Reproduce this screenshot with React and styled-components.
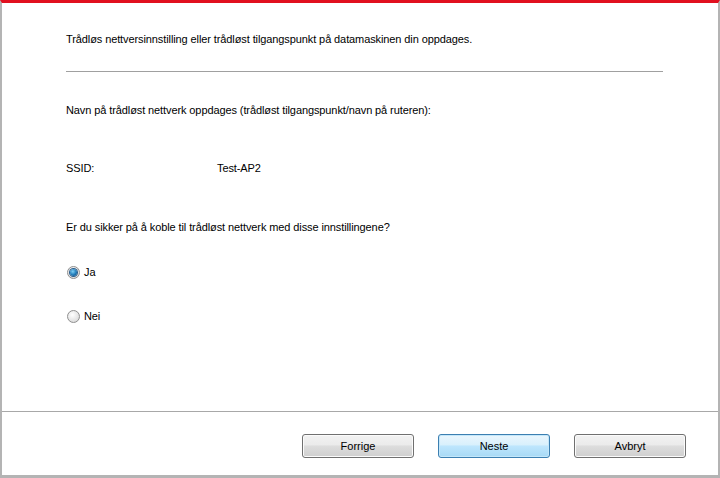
import styled, { createGlobalStyle } from "styled-components";

const GlobalStyle = createGlobalStyle`
  html, body {
    margin: 0;
    padding: 0;
    background: #ffffff;
  }
  * {
    box-sizing: border-box;
  }
`;

const Window = styled.div`
  width: 720px;
  height: 478px;
  display: flex;
  flex-direction: column;
  background: #ffffff;
  border-top: 3px solid #e1101f;
  border-left: 2px solid #b4b4b4;
  border-right: 2px solid #b4b4b4;
  border-bottom: 3px solid #b4b4b4;
  font-family: "Liberation Sans", Arial, sans-serif;
  font-size: 11px;
  letter-spacing: -0.1px;
  color: #000000;
`;

const Content = styled.div`
  flex: 1;
  display: flex;
  flex-direction: column;
  padding: 29px 55px 0 64px;
`;

const Text = styled.div`
  height: 14px;
  line-height: 14px;
  margin-top: ${(p) => p.$gap || 0}px;
  white-space: nowrap;
`;

const Divider = styled.hr`
  margin: 25px 0 0;
  border: 0;
  height: 1px;
  background: #a0a0a0;
`;

const InfoRow = styled.div`
  display: grid;
  grid-template-columns: 151px auto;
  height: 14px;
  line-height: 14px;
  margin-top: ${(p) => p.$gap}px;
`;

const RadioRow = styled.label`
  display: flex;
  align-items: center;
  gap: 4px;
  height: 14px;
  margin-top: ${(p) => p.$gap}px;
  margin-left: 1px;
`;

const RadioDot = styled.span`
  width: 13px;
  height: 13px;
  border-radius: 50%;
  border: 1px solid #8f8f8f;
  background: radial-gradient(circle at 40% 35%, #ffffff 0%, #e6e6e6 55%, #cfcfcf 100%);
  display: flex;
  align-items: center;
  justify-content: center;

  &::after {
    content: "";
    display: ${(p) => (p.$checked ? "block" : "none")};
    width: 7px;
    height: 7px;
    border-radius: 50%;
    background: radial-gradient(circle at 40% 35%, #7fd0f5 0%, #1f7ab8 55%, #0d4a7a 100%);
    box-shadow: 0 0 0 1px #2a5c8a;
  }
`;

const Footer = styled.div`
  height: 64px;
  border-top: 1px solid #a8a8a8;
  display: flex;
  justify-content: flex-end;
  align-items: flex-start;
  gap: 24px;
  padding: 22px 32px 0 0;
`;

const Button = styled.button`
  width: 112px;
  height: 24px;
  border-radius: 3px;
  font-family: "Liberation Sans", Arial, sans-serif;
  font-size: 11px;
  color: #000000;
  padding: 0;
  border: 1px solid ${(p) => (p.$primary ? "#3c7fb1" : "#707070")};
  background: ${(p) =>
    p.$primary
      ? "linear-gradient(#eaf6fd 0%, #d9f0fc 45%, #bee6fd 50%, #a7d9f5 100%)"
      : "linear-gradient(#f2f2f2 0%, #ebebeb 45%, #dddddd 50%, #cfcfcf 100%)"};
  box-shadow: inset 0 0 0 1px ${(p) => (p.$primary ? "#c4e7fa" : "#fbfbfb")};
`;

export default function App() {
  return (
    <>
      <GlobalStyle />
      <Window>
        <Content>
          <Text>
            Trådløs nettversinnstilling eller trådløst tilgangspunkt på datamaskinen din oppdages.
          </Text>
          <Divider />
          <Text $gap={31}>
            Navn på trådløst nettverk oppdages (trådløst tilgangspunkt/navn på ruteren):
          </Text>
          <InfoRow $gap={44}>
            <span>SSID:</span>
            <span>Test-AP2</span>
          </InfoRow>
          <Text $gap={45}>
            Er du sikker på å koble til trådløst nettverk med disse innstillingene?
          </Text>
          <RadioRow $gap={31}>
            <RadioDot $checked />
            <span>Ja</span>
          </RadioRow>
          <RadioRow $gap={30}>
            <RadioDot />
            <span>Nei</span>
          </RadioRow>
        </Content>
        <Footer>
          <Button>Forrige</Button>
          <Button $primary>Neste</Button>
          <Button>Avbryt</Button>
        </Footer>
      </Window>
    </>
  );
}
